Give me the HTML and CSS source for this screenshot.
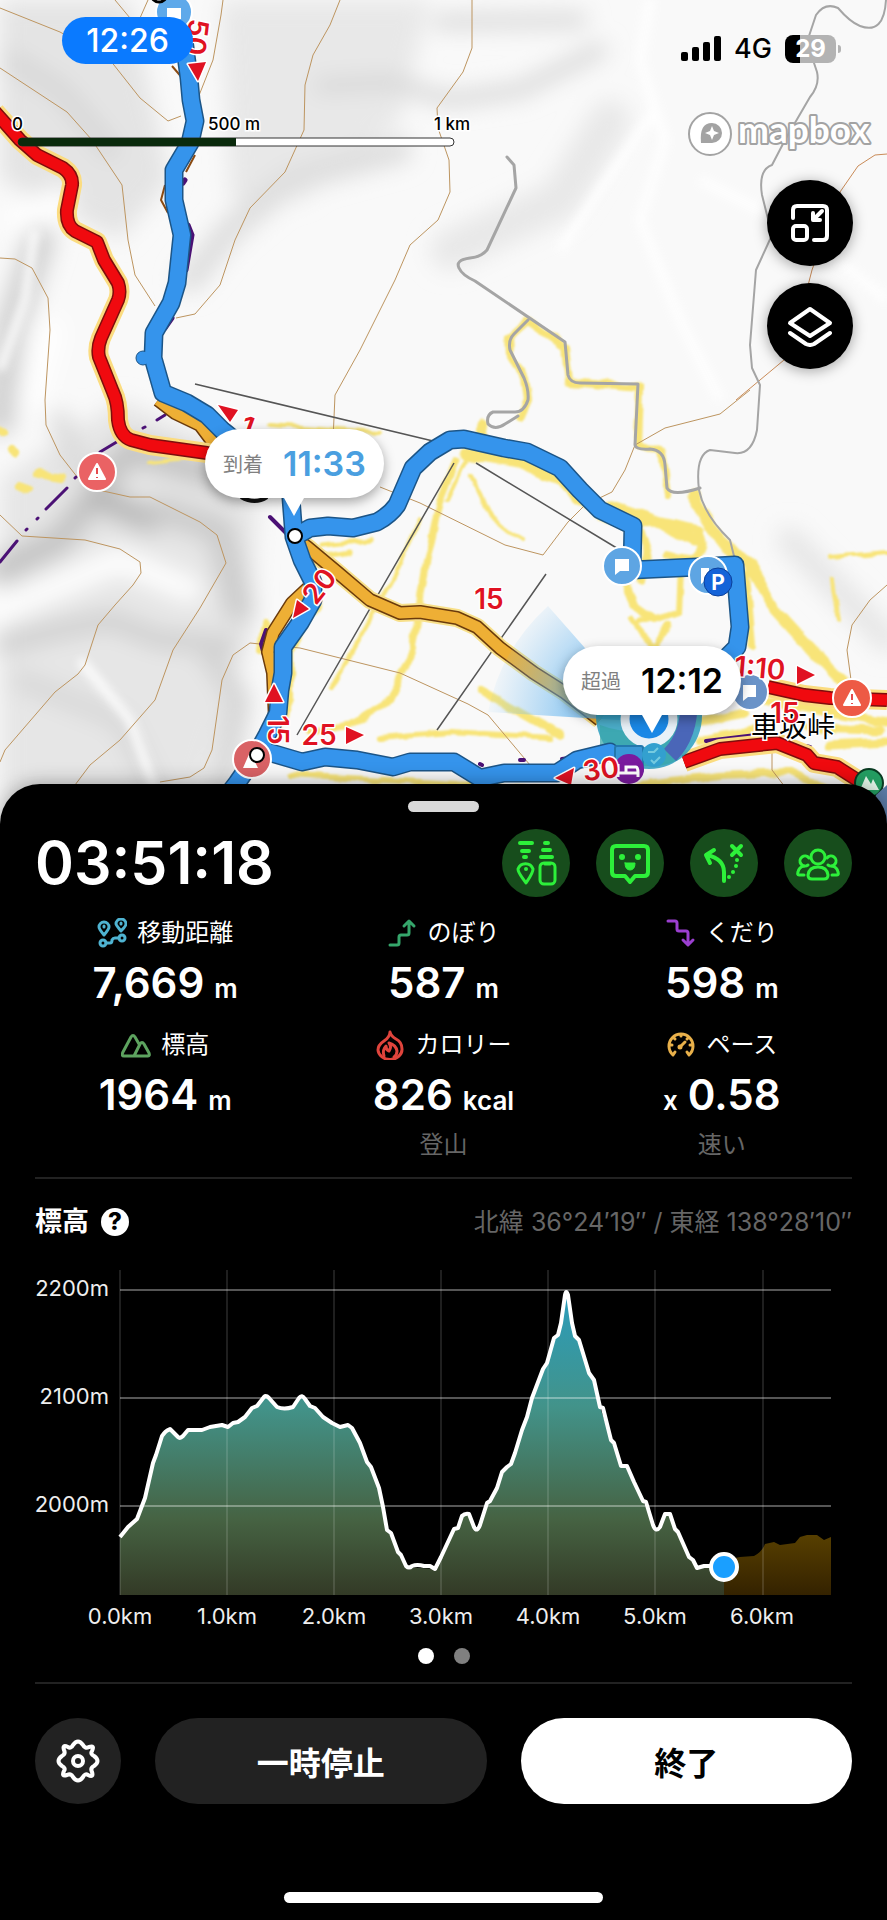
FILE: index.html
```html
<!DOCTYPE html>
<html lang="ja">
<head>
<meta charset="utf-8">
<meta name="viewport" content="width=device-width, initial-scale=1">
<title>活動記録</title>
<link rel="stylesheet" href="styles.css">
</head>
<body>
<main class="screen">
  <section class="map">
    <svg class="map-canvas" viewBox="0 0 887 830" role="img" aria-label="地図">
      <defs>
        <filter id="soft" x="-30%" y="-30%" width="160%" height="160%"><feGaussianBlur stdDeviation="11"/></filter>
        <filter id="soft2" x="-30%" y="-30%" width="160%" height="160%"><feGaussianBlur stdDeviation="5"/></filter>
        <filter id="rough" x="-5%" y="-5%" width="110%" height="110%">
          <feTurbulence type="fractalNoise" baseFrequency="0.06" numOctaves="1" seed="4" result="n"/>
          <feDisplacementMap in="SourceGraphic" in2="n" scale="9" xChannelSelector="R" yChannelSelector="G"/>
          <feGaussianBlur stdDeviation="1"/>
        </filter>
        <radialGradient id="heading" gradientUnits="userSpaceOnUse" cx="650" cy="722" r="170">
          <stop offset="0" stop-color="#3d9fe8" stop-opacity="0.9"/>
          <stop offset="0.5" stop-color="#5fb2ee" stop-opacity="0.6"/>
          <stop offset="1" stop-color="#7cc0f2" stop-opacity="0"/>
        </radialGradient>
        <path id="orange-trail" d="M296 539 L307 547 L337 572 L370 600 L400 613 L420 612 L457 618 L477 627 L500 648 L534 673 L564 692 L600 720"/>
        <path id="orange-side" d="M308 588 L292 603 L273 633 L268 652 L273 673 L275 720 M158 400 L175 413 L200 425 L215 445"/>
        <path id="red-trail" d="M-5 112 L20 140 L37 155 L63 168 Q73 175 72 185 L67 210 Q66 225 75 231 L97 242 L104 260 L118 283 Q121 292 118 300 L101 338 Q97 348 99 357 L113 392 Q118 402 118 420 Q120 436 131 440 L150 445 L207 453 L250 465 M768 687 L804 695 L830 698 L887 700 M684 762 L720 749 L777 743 L807 755 L814 763 L837 767 L870 788"/>
        <path id="track" d="M184 40 L189 78 L191 100 L195 121 L190 143 L174 170 L174 200 L182 235 L177 283 L171 303 L154 333 L153 358 L163 393 L187 403 L207 415 L222 430 L290 485 L294 537 L302 560 L313 582 L313 600 L300 623 L283 647 L283 673 L280 690 L278 713 L267 735 L255 757 L237 783 L220 805 M294 537 L310 528 L328 526 L353 528 L377 522 Q390 515 397 505 L413 468 L430 452 L450 440 L464 439 L504 448 L527 452 L560 468 L580 490 L600 510 L633 526 L632 570 L697 567 L735 565 L738 603 L740 627 L737 647 L728 656 M268 752 L302 762 L325 757 L357 760 L393 767 L410 762 L454 762 L480 778 L504 773 L557 773 L577 760 L610 752"/>
      </defs>
      <rect width="887" height="830" fill="#f9f9f9"/>

      <g filter="url(#soft)" fill="none" stroke-linecap="round" stroke-linejoin="round">
        <path d="M0 0 L130 0 L170 180 L120 240 L0 180Z" fill="#e4e4e4"/>
        <path d="M220 0 L430 0 L400 120 L300 200 L230 200Z" fill="#e8e8e8"/>
        <path d="M120 400 L260 460 L250 640 L200 800 L0 800 L0 480Z" fill="#e6e6e6"/>
        <path d="M40 240 L10 330 L0 420" stroke="#d0d0d0" stroke-width="30"/>
        <path d="M10 60 L60 90 L110 150" stroke="#d6d6d6" stroke-width="18"/>
        <path d="M320 86 L390 82 L450 100 L520 90 L600 50" stroke="#d6d6d6" stroke-width="14"/>
        <path d="M440 22 L580 20" stroke="#dadada" stroke-width="16"/>
        <path d="M450 250 L560 200 L610 120" stroke="#e8e8e8" stroke-width="40"/>
        <path d="M190 280 L230 230 L290 180 L400 150" stroke="#dedede" stroke-width="26"/>
        <path d="M60 420 L80 470" stroke="#dadada" stroke-width="20"/>
        <path d="M230 480 L130 450 L90 500 L60 540 L0 570" stroke="#c2c2c2" stroke-width="26"/>
        <path d="M100 500 L150 520" stroke="#b8b8b8" stroke-width="26"/>
        <path d="M160 510 L220 530 L240 610" stroke="#cbcbcb" stroke-width="28"/>
        <path d="M0 645 L60 630 L110 620 L160 640 L230 645" stroke="#c8c8c8" stroke-width="14"/>
        <path d="M200 640 L240 700 L220 800" stroke="#d2d2d2" stroke-width="20"/>
        <path d="M20 680 L120 720 L160 800" stroke="#d8d8d8" stroke-width="20"/>
        <path d="M790 540 L887 640" stroke="#e6e6e6" stroke-width="26"/>
        <path d="M0 610 L60 585 L120 560 L190 590" stroke="#fff" stroke-width="24"/>
        <path d="M20 220 L60 200 M30 400 L50 330" stroke="#fff" stroke-width="26"/>
      </g>
      <g filter="url(#soft2)" fill="none" stroke="#fff" stroke-width="9" opacity="0.9">
        <path d="M650 0 L640 60 L655 110 L600 190 L560 250"/>
        <path d="M655 110 L665 140 L640 220 L680 320 L720 400"/>
        <path d="M700 180 L800 230 L887 300"/>
        <path d="M80 660 L130 720 L155 790"/>
        <path d="M35 230 L25 300 L0 370"/>
      </g>

      <g fill="none" stroke="#f8e478" stroke-linecap="round" stroke-linejoin="round" filter="url(#rough)">
        <path d="M526 322 L509 337 L510 355 L525 378 L528 400 L520 418 M530 322 L565 347 L569 382 L640 388 L638 445 L662 452 L668 495" stroke-width="8"/>
        <path d="M480 436 L482 424 M465 454 L520 462 L560 480 L600 515 L650 520 L695 540" stroke-width="11"/>
        <path d="M610 505 L660 522 L700 530 M697 530 Q710 550 690 560 L668 556 M640 530 L648 555 L640 580" stroke-width="9"/>
        <path d="M456 460 L440 500 L425 570 L412 650 L390 700 L350 725 L310 732" stroke-width="7"/>
        <path d="M465 462 L448 500 M420 520 L395 575 L330 690" stroke-width="4"/>
        <path d="M692 495 L720 540 L750 565 L775 610 L830 670 L850 690" stroke-width="11"/>
        <path d="M626 582 L634 605 L655 620 L678 612 L680 570" stroke-width="8"/>
        <path d="M746 575 L752 645" stroke-width="8"/>
        <path d="M470 475 L490 515 L520 540" stroke-width="4"/>
        <path d="M760 700 L887 722 M690 725 L745 712 M830 745 L887 742 M810 728 L880 730" stroke-width="9"/>
        <path d="M480 690 L560 735 M700 740 L765 728 M640 785 L720 775 L790 772 L850 800" stroke-width="8"/>
        <path d="M290 775 L420 782 L560 790 M380 738 L450 732 L550 738" stroke-width="6"/>
        <path d="M630 618 L655 650 L668 625 M640 622 L670 614" stroke-width="6"/>
        <path d="M38 474 L62 478 M20 486 L28 490 M0 430 L4 433 M12 450 L15 452" stroke-width="8"/>
        <path d="M270 425 L380 432 M830 557 L887 552 M832 580 L838 620 M150 462 L185 458" stroke-width="4"/>
        <path d="M322 545 L370 540 M300 560 L350 552" stroke-width="5"/>
        <path d="M302 556 L313 578 L316 605 L303 627 L290 650 L290 700 L275 735 M266 622 L262 650" stroke-width="8"/>
      </g>

      <g fill="none" stroke="#bd9560" stroke-width="1">
        <path d="M0 8 L60 32 L110 60 L140 98 L168 121 L181 116"/>
        <path d="M115 0 L130 18 M148 0 L140 18"/>
        <path d="M223 0 L221 15 L213 60 L198 98"/>
        <path d="M0 68 L67 112 L92 140 L122 185 L128 240 L135 275 L155 306"/>
        <path d="M340 0 L330 25 L313 55 L305 85 L304 130 L285 172 L250 208 L235 240 L220 285 L195 314 L176 318"/>
        <path d="M0 258 L15 259 L32 268 L48 298 L50 330 L45 400 L46 425 L60 455 L85 487 L130 497 L150 497 L200 522 L217 535 L226 563 L200 608 L173 650 L155 700 L120 740 L90 765 L75 785"/>
        <path d="M472 0 L472 48 L463 72 L437 108 L438 128 L449 160 L450 192 L438 220 L410 245 L395 280 L360 350 L335 395 L333 440"/>
        <path d="M0 515 L22 536 L85 540 L120 549 L140 562 L141 573 L133 585 L115 605 L98 625 L85 665 L78 674 L55 692 L5 750 L0 762"/>
        <path d="M160 782 L190 777 L204 768 L212 750 L222 680 L233 655 L250 643 L300 648 L400 673 L468 704 L488 715 L530 765"/>
        <path d="M380 487 L420 503 L505 545 L543 555 L568 522 L585 505 L612 492 L625 470 L635 445 L665 428 L720 414 L750 390"/>
        <path d="M887 154 L875 155 L858 166 L840 192 L812 270 L790 355 L736 400" stroke="#c98b58"/>
        <path d="M887 585 L870 600 L852 625 L847 650 L851 680 M772 750 L772 770 L785 787"/>
      </g>

      <g fill="none" stroke="#a5a5a5" stroke-linecap="round" stroke-linejoin="round">
        <path d="M507 157 L514 165 L516 188 L487 250 Q481 257 470 258 Q455 260 459 268 Q462 275 475 281 L565 342 L568 375 Q570 383 580 383 L638 384 L635 445 Q636 450 650 449 Q664 450 665 465 L667 488 Q672 497 700 488" stroke-width="3"/>
        <path d="M528 320 L514 334 Q508 340 510 350 L524 378 Q529 390 528 400 Q524 412 515 412 L493 412 Q486 415 488 424 Q495 431 505 424 L518 416" stroke-width="3"/>
        <path d="M886 0 Q884 35 860 26 Q850 22 838 8 Q825 2 816 15 L807 42 L817 72 Q820 85 810 97 L785 140 L772 165 Q758 170 762 195 L772 235 L756 270 L750 345 L752 368 L760 385 L757 430 Q752 455 735 453 L710 450 Q695 455 699 490 Q704 515 730 540 L735 560" stroke-width="2"/>
      </g>
      <path d="M195 384 L433 441 M476 463 L620 550 M454 463 L297 735 M546 574 L437 730" fill="none" stroke="#555" stroke-width="1.5"/>

      <g fill="none" stroke="#4b1175" stroke-width="3" stroke-linecap="round">
        <path d="M0 562 L17 541 M46 509 L67 488 M100 452 L120 440 M157 420 L165 415 M26 530 L27 529 M37 519 L38 518 M75 478 L76 477 M143 428 L145 427 M84 467 L85 466"/>
        <path d="M183 183 L185 180 M188 225 L192 235 L186 270 M172 318 L165 328" stroke-width="5"/>
        <path d="M270 517 L290 537 M266 630 L261 644 L264 655 M706 741 L765 734 M520 760 L524 760 M562 759 L590 755 M480 764 L482 765 M806 746 L810 747" stroke-width="4"/>
      </g>

      <g fill="none" stroke-linejoin="round">
        <use href="#orange-trail" stroke="#f8e08a" stroke-width="18"/>
        <use href="#orange-trail" stroke="#6b3b0c" stroke-width="14"/>
        <use href="#orange-trail" stroke="#eeaf35" stroke-width="11"/>
        <use href="#orange-side" stroke="#6b3b0c" stroke-width="14"/>
        <use href="#orange-side" stroke="#eeaf35" stroke-width="11"/>
        <path d="M172 66 L184 80 M195 155 L186 172 M165 185 L161 200 L168 213" stroke="#8a4a12" stroke-width="2"/>
        <use href="#red-trail" stroke="#fbdc80" stroke-width="20"/>
        <use href="#red-trail" stroke="#7d0d0d" stroke-width="14"/>
        <use href="#red-trail" stroke="#f00a0f" stroke-width="11"/>
      </g>

      <path d="M650 722 L548 606 Q500 650 488 712 Z" fill="url(#heading)"/>
      <circle cx="649" cy="716" r="53" fill="#2d9fc0" opacity="0.85"/>
      <path d="M600 725 Q640 740 690 720 L678 760 Q640 778 600 745Z" fill="#38a7a8" opacity="0.7"/>

      <g fill="none" stroke-linejoin="round" stroke-linecap="round">
        <use href="#track" stroke="#1c5587" stroke-width="19"/>
        <circle cx="143" cy="358" r="7" fill="#3594ec" stroke="#1c5587" stroke-width="1"/>
        <use href="#track" stroke="#3594ec" stroke-width="16"/>
        <path d="M689 700 Q690 735 670 755" stroke="#4a66b8" stroke-width="17" stroke-linecap="butt"/>
        <circle cx="649" cy="719" r="24" fill="#1a88e6" stroke="#e8f1f8" stroke-width="9"/>
      </g>

      <g stroke="#fff" stroke-width="2">
        <circle cx="174" cy="12" r="18" fill="#5ea9ea"/>
        <circle cx="622" cy="566" r="19" fill="#5ea5e3"/>
        <circle cx="708" cy="575" r="19" fill="#5ea5e3"/>
        <circle cx="750" cy="692" r="18" fill="#6a93c8"/>
        <circle cx="97" cy="472" r="19" fill="#ea6264"/>
        <circle cx="252" cy="759" r="19" fill="#d96265"/>
        <circle cx="852" cy="698" r="19" fill="#ed5a45"/>
      </g>
      <g fill="#fff">
        <path d="M167 8 h14 v11 h-9 l-5 4z M615 559 h14 v12 h-9 l-5 4z M743 685 h13 v12 h-8 l-5 4z M701 568 h8 v12 h-3 l-5 4z"/>
        <path d="M97 464 L105 479 H89Z M852 690 L860 705 H844Z" stroke="#fff" stroke-width="2" stroke-linejoin="round"/>
        <path d="M250 752 L258 768 H243Z"/>
      </g>
      <path d="M97 468 v6 M97 477 v1 M852 694 v6 M852 703 v1" stroke="#e54a4c" stroke-width="2"/>
      <circle cx="159" cy="-6" r="8" fill="#fff" stroke="#000" stroke-width="3"/>
      <path d="M241 497 Q255 505 267 497" fill="none" stroke="#111" stroke-width="4"/>
      <circle cx="295" cy="536" r="7" fill="#fff" stroke="#000" stroke-width="2"/>
      <circle cx="257" cy="755" r="7" fill="#fff" stroke="#000" stroke-width="2"/>
      <circle cx="718" cy="582" r="14" fill="#1463d8" stroke="#0b3f99" stroke-width="1"/>
      <text class="map-p" x="718" y="590">P</text>
      <rect x="615" y="746" width="28" height="26" rx="2" fill="#3997d6" stroke="#2378ad" stroke-width="2"/>
      <circle cx="654" cy="755" r="12" fill="#33a0cf"/>
      <path d="M648 752 h6 l4 -4 M651 760 l3 3 6 -6" fill="none" stroke="#75cbe0" stroke-width="2"/>
      <circle cx="629" cy="769" r="15" fill="#7a1a9e"/>
      <path d="M618 764 v13 M618 773 h20 v4 M626 772 v-5 h10 q2 0 2 6" fill="none" stroke="#fff" stroke-width="3"/>
      <circle cx="869" cy="783" r="14" fill="#249e62" stroke="#0a3b22" stroke-width="2"/>
      <path d="M860 790 L866 776 L871 784 L873 779 L879 790Z" fill="#e5f7ea"/>
      <path d="M876 830 V795 L887 785 V830Z" fill="#5b7ca8"/>

      <text class="place-name" x="793" y="737">車坂峠</text>
      <g class="course-time">
        <text x="489" y="609">15</text>
        <text x="319" y="745">25</text>
        <text transform="translate(602 779) rotate(-7)">30</text>
        <text transform="translate(759 678) rotate(5)">1:10</text>
        <text x="785" y="723">15</text>
        <text transform="translate(327 592) rotate(-52)">20</text>
        <text transform="translate(268 730) rotate(90)">15</text>
        <text transform="translate(187 36) rotate(97)">50</text>
        <text transform="translate(244 436) rotate(20)">1</text>
        <path d="M346 727 L364 735 L346 744Z M797 666 L815 675 L797 684Z M555 778 L574 768 L571 785Z M188 64 L206 62 L198 81Z M218 405 L238 410 L230 422Z M293 618 L297 600 L309 609Z M274 684 L283 702 L265 702Z"/>
      </g>

      <rect x="18" y="138" width="436" height="8" rx="4" fill="#fff" stroke="#333" stroke-width="1"/>
      <path d="M236 138 H22 a4 4 0 0 0 0 8 H236Z" fill="#0a2a0c"/>
      <g class="scale-text">
        <text x="12" y="130">0</text>
        <text x="208" y="130">500 m</text>
        <text x="434" y="130">1 km</text>
      </g>

      <circle cx="710" cy="134" r="21" fill="#fff" stroke="#a3a3a3" stroke-width="2"/>
      <path d="M701 143 Q699 123 712 123 A10 10 0 0 1 712 143 Z" fill="#a3a3a3"/>
      <path d="M712 126 L714 131 L719 133 L714 135 L712 140 L710 135 L705 133 L710 131Z" fill="#fff"/>
      <text class="mapbox" x="738" y="143">mapbox</text>
    </svg>

    <header class="status">
      <span class="clock">12:26</span>
      <div class="network">
        <svg width="40" height="26" viewBox="0 0 40 26" aria-hidden="true"><g fill="#000"><rect x="0" y="16" width="7" height="9" rx="2"/><rect x="11" y="11" width="7" height="14" rx="2"/><rect x="22" y="6" width="7" height="19" rx="2"/><rect x="33" y="0" width="7" height="25" rx="2"/></g></svg>
        <span>4G</span>
        <span class="battery">29</span>
      </div>
    </header>

    <div class="map-tools">
      <button type="button" aria-label="縮小表示">
        <svg width="42" height="42" viewBox="0 0 42 42" fill="none" stroke="#fff" stroke-width="4" stroke-linecap="round" stroke-linejoin="round"><path d="M4 16 V8 Q4 4 8 4 H34 Q38 4 38 8 V34 Q38 38 34 38 H25"/><rect x="4" y="24" width="14" height="14" rx="3"/><path d="M33 9 L25 17 M24 11 V18 H31" stroke-width="4"/></svg>
      </button>
      <button type="button" aria-label="レイヤー">
        <svg width="46" height="42" viewBox="0 0 46 42" fill="none" stroke="#fff" stroke-width="4" stroke-linecap="round" stroke-linejoin="round"><path d="M23 4 L43 18 L23 31 L3 18Z"/><path d="M3 28 L19 39 Q23 41 27 39 L43 28"/></svg>
      </button>
    </div>

    <div class="callout callout-arrive"><span>到着</span><time>11:33</time></div>
    <div class="callout callout-over"><span>超過</span><time>12:12</time></div>
  </section>

  <section class="sheet">
    <div class="handle"></div>
    <div class="head">
      <div class="timer">03:51:18</div>
      <div class="modes">
        <button type="button" aria-label="位置共有"><svg viewBox="0 0 68 68"><path d="M18 14 H30 M20 22 H27 M22 28 H24 M43 14 H46 M41 21 H48 M39 28 H50" stroke-width="4"/><path d="M24 54 C20 48 16 44 16 40 A8 8 0 0 1 31 40 C31 44 28 48 24 54Z"/><circle cx="24" cy="40" r="2" class="dot"/><rect x="38" y="34" width="15" height="21" rx="4"/><path d="M43 35 H48"/></svg></button>
        <button type="button" aria-label="フィールドメモ"><svg viewBox="0 0 68 68"><path d="M20 17 H48 Q52 17 52 21 V43 Q52 47 48 47 H39 L34 53 L29 47 H20 Q16 47 16 43 V21 Q16 17 20 17Z" stroke-width="4"/><g class="dot"><circle cx="26" cy="28" r="3"/><circle cx="42" cy="28" r="3"/><path d="M29 34 H39 Q39 41 34 41 Q29 41 29 34Z" stroke="#2df03a" stroke-width="1"/></g></svg></button>
        <button type="button" aria-label="ルート"><svg viewBox="0 0 68 68"><path d="M34 52 V43 Q34 30 17 26 M24 21 L16 26 L20 34" stroke-width="4"/><path d="M42 17 L51 26 M51 17 L42 26" stroke-width="4"/><g class="dot"><circle cx="47" cy="31" r="2"/><circle cx="46" cy="37" r="2"/><circle cx="43" cy="43" r="2"/><circle cx="39" cy="48" r="2"/></g></svg></button>
        <button type="button" aria-label="グループ"><svg viewBox="0 0 68 68"><circle cx="34" cy="28" r="7"/><path d="M28 50 Q24 50 24 46 Q25 38 34 38 Q43 38 44 46 Q44 50 40 50Z"/><path d="M24 36 A5 5 0 1 1 25 29 M44 36 A5 5 0 1 0 43 29"/><path d="M20 46 H15 Q13 46 14 43 Q15 38 20 37 M48 46 H53 Q55 46 54 43 Q53 38 48 37"/></svg></button>
      </div>
    </div>

    <div class="stats">
      <div class="stat">
        <div class="label"><svg viewBox="0 0 30 30" stroke="#4fb3d1"><path d="M7 17 Q2 11 2 9 A5 5 0 0 1 12 9 Q12 11 7 17Z M24 13 Q19 7 19 6 A5 5 0 0 1 29 6 Q29 8 24 13Z"/><path d="M7 8 V9 M24 5 V6"/><circle cx="6" cy="25" r="3"/><circle cx="25" cy="20" r="3"/><path d="M9 25 H13 Q15 25 15 22 Q16 20 18 20 H22"/></svg><span>移動距離</span></div>
        <div class="value">7,669<small>m</small></div>
      </div>
      <div class="stat">
        <div class="label"><svg viewBox="0 0 30 30" stroke="#35a66b"><path d="M3 27 H10 Q12 27 12 25 V19 Q12 17 14 17 H20 Q22 17 22 15 V4 M17 8 L22 3 L27 8"/></svg><span>のぼり</span></div>
        <div class="value">587<small>m</small></div>
      </div>
      <div class="stat">
        <div class="label"><svg viewBox="0 0 30 30" stroke="#9b3fd0"><path d="M2 3 H9 Q11 3 11 5 V11 Q11 13 13 13 H20 Q22 13 22 15 V26 M17 22 L22 27 L27 22"/></svg><span>くだり</span></div>
        <div class="value">598<small>m</small></div>
      </div>
      <div class="stat">
        <div class="label"><svg viewBox="0 0 30 30" stroke="#5da35f"><path d="M13 26 H3 Q0 26 2 22 L10 7 Q12 4 14 7 L18 14 M13 26 L19 14 Q21 11 23 14 L28 23 Q29 26 27 26Z"/></svg><span>標高</span></div>
        <div class="value">1964<small>m</small></div>
      </div>
      <div class="stat">
        <div class="label"><svg viewBox="0 0 30 30" stroke="#e0443c"><path d="M15 2 Q15 7 9 11 Q3 15 3 20 A12 10 0 0 0 27 19 Q27 12 21 9 Q16 6 15 2Z"/><path d="M9 26 Q7 20 11 16 Q11 20 14 21 Q17 17 14 13 Q21 15 22 21 Q22 25 19 27"/></svg><span>カロリー</span></div>
        <div class="value">826<small>kcal</small></div>
        <div class="note">登山</div>
      </div>
      <div class="stat">
        <div class="label"><svg viewBox="0 0 30 30" stroke="#e8b04a"><path d="M7 25 A12 12 0 1 1 23 25 M7 25 L9 22 M23 25 L21 22 M15 4 V6 M4 15 H6 M24 15 H26 M8 8 L9 9 M22 8 L21 9 M14 17 L19 12"/><circle cx="14" cy="17" r="1"/></svg><span>ペース</span></div>
        <div class="value"><small>x</small>0.58</div>
        <div class="note">速い</div>
      </div>
    </div>

    <div class="profile-head">
      <h2>標高</h2>
      <button type="button" class="help" aria-label="ヘルプ">?</button>
      <p>北緯 36°24′19″ / 東経 138°28′10″</p>
    </div>

    <svg class="profile" viewBox="0 0 887 375" role="img" aria-label="標高グラフ">
      <defs>
        <linearGradient id="fill" gradientUnits="userSpaceOnUse" x1="0" y1="30" x2="0" y2="335">
          <stop offset="0" stop-color="#2a9dbd"/>
          <stop offset="0.38" stop-color="#42938a"/>
          <stop offset="0.75" stop-color="#466343"/>
          <stop offset="1" stop-color="#333a26"/>
        </linearGradient>
        <linearGradient id="ahead" x1="0" y1="0" x2="0" y2="1"><stop offset="0" stop-color="#573f00"/><stop offset="1" stop-color="#342200"/></linearGradient>
      </defs>
      <path d="M724 335 V300 L740 297 L754 296 Q762 292 765 284 L774 282 L780 285 L795 283 L800 277 L807 275 L817 275 L824 280 L831 277 V335Z" fill="url(#ahead)"/>
      <path d="M120 335 V277 L128 267 L137 259 L145 238 L153 203 L156 195 L162 176 L170 169 L180 178 L188 170 L202 170 L210 167 L222 165 L228 167 L233 163 L245 157 L252 148 L257 146 L266 136 L277 147 L284 149 L293 147 L302 136 L310 146 L315 148 L323 157 L332 163 L340 167 L348 166 L352 168 L360 183 L367 202 L371 207 L379 228 L383 247 L387 270 L391 273 L398 292 L406 307 L435 309 L441 297 L454 269 L458 268 L462 255 L469 254 L476 270 L480 265 L487 243 L490 241 L497 228 L502 212 L511 204 L522 170 L532 138 L543 109 L547 103 L554 78 L558 75 L566 32 L575 76 L579 80 L589 113 L594 120 L600 147 L611 180 L621 206 L627 206 L643 241 L656 270 L665 254 L670 254 L675 269 L689 297 L697 308 L724 307 V335Z" fill="url(#fill)"/>
      <path d="M120 30 H831 M120 138 H831 M120 246 H831" stroke="#fff" stroke-opacity="0.45" stroke-width="1.5"/>
      <path d="M120 10 V335 M227 10 V335 M334 10 V335 M441 10 V335 M548 10 V335 M655 10 V335 M763 10 V335" stroke="#fff" stroke-opacity="0.12" stroke-width="2"/>
      <path d="M120 277 L128 267 L137 259 L145 238 L153 203 L156 195 L162 176 Q165 171 170 169 L178 177 Q180 179 183 176 L188 170 L202 170 L210 167 L222 165 L228 167 L233 163 L238 162 L245 157 L252 148 L257 146 L264 137 Q266 135 269 138 L277 147 Q284 150 293 147 L299 138 Q302 134 305 139 L310 146 L315 148 L323 157 L332 163 L340 167 L348 165 L352 168 L360 183 L367 202 L371 207 L379 228 L383 247 L387 270 L391 273 L398 292 L401 295 L406 306 Q409 309 412 306 Q417 304 424 306 L430 306 L435 309 L441 297 L454 269 L458 268 L462 256 Q465 253 469 254 L474 267 Q477 273 480 265 L487 243 L490 241 L497 228 L502 212 L507 207 L511 204 L515 193 L522 170 L527 157 L532 138 L543 109 L547 103 L554 78 L558 75 L561 63 L565 35 Q566 29 568 35 L572 63 L575 76 L579 80 L589 113 L594 120 L600 147 L603 148 L611 180 L614 183 L621 206 L627 206 L634 222 L643 241 L646 242 L653 265 Q656 273 660 267 L665 254 L670 254 L675 269 L678 272 L689 297 L693 300 L697 308 L704 306 L724 306" fill="none" stroke="#fff" stroke-width="4" stroke-linejoin="round"/>
      <circle cx="724" cy="307" r="13" fill="#1a9fff" stroke="#fff" stroke-width="4"/>
      <g class="axis axis-y"><text x="109" y="36">2200m</text><text x="109" y="144">2100m</text><text x="109" y="252">2000m</text></g>
      <g class="axis axis-x"><text x="120" y="364">0.0km</text><text x="227" y="364">1.0km</text><text x="334" y="364">2.0km</text><text x="441" y="364">3.0km</text><text x="548" y="364">4.0km</text><text x="655" y="364">5.0km</text><text x="762" y="364">6.0km</text></g>
    </svg>

    <div class="pager"><i class="on"></i><i></i></div>

    <div class="actions">
      <button type="button" class="settings" aria-label="設定"><svg width="48" height="48" viewBox="0 0 48 48" fill="none" stroke="#fff" stroke-width="4" stroke-linejoin="round"><path d="M19 8 Q24 1 29 8 Q31 12 35 10 Q41 8 38 14 Q36 17 40 19 Q47 24 40 29 Q36 31 38 35 Q40 41 34 38 Q31 36 29 40 Q24 47 19 40 Q17 36 13 38 Q7 40 10 34 Q12 31 8 29 Q1 24 8 19 Q12 17 10 13 Q8 7 14 10 Q17 12 19 8Z"/><circle cx="24" cy="24" r="5"/></svg></button>
      <button type="button" class="pause">一時停止</button>
      <button type="button" class="finish">終了</button>
    </div>
    <div class="home"></div>
  </section>
</main>
</body>
</html>
```

FILE: styles.css
```css
* { box-sizing: border-box; }

body {
  margin: 0;
  background: #000;
  color: #fff;
  font-family: Inter, "Noto Sans CJK JP", sans-serif;
}

button {
  border: 0;
  padding: 0;
  color: inherit;
  font: inherit;
  display: flex;
  align-items: center;
  justify-content: center;
  cursor: pointer;
}

.map { position: relative; }
.map-canvas { display: block; width: 100%; }

.map-p { fill: #fff; font-size: 21px; font-weight: 700; text-anchor: middle; }

.course-time {
  fill: #e01222;
  stroke: #fff;
  stroke-width: 3px;
  stroke-linejoin: round;
  paint-order: stroke;
  font-size: 28px;
  font-weight: 600;
  text-anchor: middle;
}

.place-name {
  fill: #000;
  stroke: #fff;
  stroke-width: 3px;
  paint-order: stroke;
  font-size: 28px;
  text-anchor: middle;
}

.scale-text text {
  fill: #000;
  stroke: #fff;
  stroke-width: 3px;
  paint-order: stroke;
  font-size: 17px;
  font-weight: 500;
}

.mapbox {
  fill: #fff;
  stroke: #a3a3a3;
  stroke-width: 4px;
  stroke-linejoin: round;
  paint-order: stroke;
  font-family: Lato, sans-serif;
  font-size: 37px;
  font-weight: 700;
}

.status {
  position: absolute;
  inset: 0 0 auto;
  padding: 17px 51px 0 62px;
  display: flex;
  align-items: center;
  justify-content: space-between;
}

.clock {
  min-width: 131px;
  border-radius: 24px;
  background: #0a7aff;
  font-size: 32px;
  font-weight: 500;
  line-height: 47px;
  text-align: center;
}

.network {
  display: flex;
  align-items: center;
  gap: 13px;
  padding-top: 16px;
  color: #000;
  font-size: 27px;
  font-weight: 500;
  line-height: 28px;
}

.battery {
  position: relative;
  width: 51px;
  border-radius: 8px;
  background: linear-gradient(90deg, #000 30%, #b3b3b3 30%);
  color: #fff;
  font-size: 24px;
  font-weight: 700;
  text-align: center;
}
.battery::after {
  content: "";
  position: absolute;
  left: 100%;
  top: 10px;
  width: 3px;
  height: 8px;
  margin-left: 2px;
  border-radius: 0 4px 4px 0;
  background: #b3b3b3;
}

.map-tools {
  position: absolute;
  top: 180px;
  right: 34px;
  display: grid;
  gap: 17px;
}
.map-tools button {
  width: 86px;
  height: 86px;
  border-radius: 50%;
  background: #000;
  box-shadow: 0 2px 14px rgba(0, 0, 0, 0.35);
}

.callout {
  position: absolute;
  display: flex;
  align-items: center;
  gap: 20px;
  height: 69px;
  padding: 0 18px;
  border-radius: 35px;
  background: #fff;
  color: #000;
  box-shadow: 0 4px 12px rgba(0, 0, 0, 0.35);
}
.callout::after {
  content: "";
  position: absolute;
  top: 100%;
  left: 50%;
  margin-left: -10px;
  border: 10px solid transparent;
  border-top: 18px solid #fff;
  border-bottom: 0;
}
.callout span { color: #808080; font-size: 20px; }
.callout time { font-size: 34px; font-weight: 600; }
.callout-arrive { top: 429px; left: 205px; }
.callout-arrive time { color: #4a9fe0; }
.callout-over { top: 646px; left: 563px; }

.sheet {
  position: relative;
  margin-top: -46px;
  padding: 17px 0;
  border-radius: 40px 40px 0 0;
  background: #000;
  box-shadow: 0 0 20px rgba(0, 0, 0, 0.35);
}

.handle {
  width: 71px;
  height: 11px;
  margin: 0 auto;
  border-radius: 6px;
  background: #d9d9d9;
}

.head {
  display: flex;
  align-items: center;
  justify-content: space-between;
  margin: 17px 35px 20px;
}
.timer { font-size: 59px; font-weight: 600; line-height: 68px; }

.modes { display: flex; gap: 26px; }
.modes button {
  width: 68px;
  height: 68px;
  border-radius: 50%;
  background: #174d1c;
}
.modes svg {
  width: 68px;
  height: 68px;
  fill: none;
  stroke: #2df03a;
  stroke-width: 3px;
  stroke-linecap: round;
  stroke-linejoin: round;
}
.modes .dot { fill: #2df03a; stroke: none; }

.stats {
  display: grid;
  grid-template-columns: repeat(3, 1fr);
  row-gap: 20px;
  padding: 0 26px;
}
.stat { text-align: center; }

.label {
  display: flex;
  align-items: center;
  justify-content: center;
  gap: 10px;
  margin-bottom: 8px;
  font-size: 24px;
  line-height: 32px;
}
.label svg {
  width: 30px;
  height: 30px;
  fill: none;
  stroke-width: 3px;
  stroke-linecap: round;
  stroke-linejoin: round;
}

.value {
  display: flex;
  align-items: baseline;
  justify-content: center;
  gap: 10px;
  font-size: 42px;
  font-weight: 600;
  line-height: 52px;
}
.value small { font-size: 26px; line-height: 26px; }

.note { margin-top: 8px; color: #666; font-size: 24px; line-height: 32px; }

.profile-head {
  display: flex;
  align-items: center;
  gap: 12px;
  margin: 16px 35px 22px;
  padding-top: 27px;
  border-top: 2px solid #222;
  line-height: 32px;
}
.profile-head h2 { margin: 0; font-size: 27px; font-weight: 700; }
.profile-head p { margin: 0 0 0 auto; color: #666; font-size: 25px; }

.help {
  width: 28px;
  height: 28px;
  border-radius: 50%;
  background: #fff;
  color: #000;
  font-size: 24px;
  font-weight: 800;
  line-height: 28px;
}

.profile { display: block; width: 100%; }
.axis text { fill: #eee; font-size: 22px; }
.axis-y { text-anchor: end; }
.axis-x { text-anchor: middle; }

.pager {
  display: flex;
  justify-content: center;
  gap: 20px;
  margin: 13px 35px 0;
  padding-bottom: 18px;
  border-bottom: 2px solid #222;
}
.pager i { width: 16px; height: 16px; border-radius: 50%; background: #808080; }
.pager .on { background: #fff; }

.actions {
  display: grid;
  grid-template-columns: 86px 1fr 1fr;
  gap: 34px;
  margin: 34px 35px 88px;
}
.actions button {
  height: 86px;
  border-radius: 43px;
  background: #222;
  font-size: 32px;
  font-weight: 600;
}
.actions .finish { background: #fff; color: #000; }

.home {
  width: 36%;
  height: 11px;
  margin: 0 auto;
  border-radius: 6px;
  background: #fff;
}
```
